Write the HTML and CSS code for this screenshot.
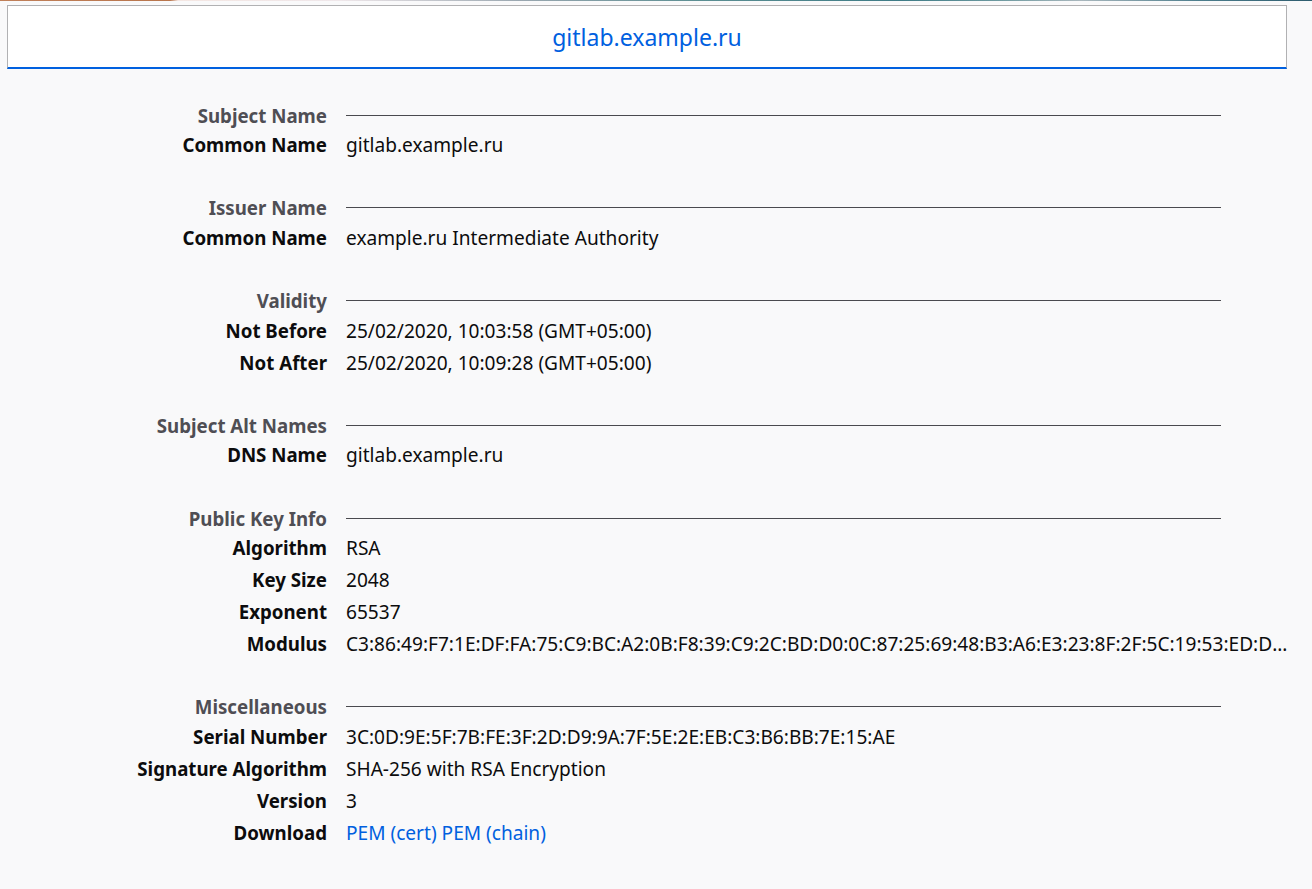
FILE: index.html
```html
<!DOCTYPE html>
<html lang="en">
<head>
<meta charset="utf-8">
<title>Certificate</title>
<link rel="stylesheet" href="styles.css">
</head>
<body>
<div class="strip"></div>
<div class="tab"><span class="tab-title">gitlab.example.ru</span></div>
<main class="cert">
  <section class="group">
    <div class="head"><span class="head-label">Subject Name</span><span class="rule"></span></div>
    <div class="row"><span class="label">Common Name</span><span class="value">gitlab.example.ru</span></div>
  </section>
  <section class="group">
    <div class="head"><span class="head-label">Issuer Name</span><span class="rule"></span></div>
    <div class="row"><span class="label">Common Name</span><span class="value">example.ru Intermediate Authority</span></div>
  </section>
  <section class="group">
    <div class="head"><span class="head-label">Validity</span><span class="rule"></span></div>
    <div class="row"><span class="label">Not Before</span><span class="value">25/02/2020, 10:03:58 (GMT+05:00)</span></div>
    <div class="row"><span class="label">Not After</span><span class="value">25/02/2020, 10:09:28 (GMT+05:00)</span></div>
  </section>
  <section class="group">
    <div class="head"><span class="head-label">Subject Alt Names</span><span class="rule"></span></div>
    <div class="row"><span class="label">DNS Name</span><span class="value">gitlab.example.ru</span></div>
  </section>
  <section class="group">
    <div class="head"><span class="head-label">Public Key Info</span><span class="rule"></span></div>
    <div class="row"><span class="label">Algorithm</span><span class="value">RSA</span></div>
    <div class="row"><span class="label">Key Size</span><span class="value">2048</span></div>
    <div class="row"><span class="label">Exponent</span><span class="value">65537</span></div>
    <div class="row"><span class="label">Modulus</span><span class="value">C3:86:49:F7:1E:DF:FA:75:C9:BC:A2:0B:F8:39:C9:2C:BD:D0:0C:87:25:69:48:B3:A6:E3:23:8F:2F:5C:19:53:ED:D4:7A:91:3E:0F:B2:64:C8:5D:11:9A:E7:40:2B:6C:D3:88:F1:05:7E:A9</span></div>
  </section>
  <section class="group">
    <div class="head"><span class="head-label">Miscellaneous</span><span class="rule"></span></div>
    <div class="row"><span class="label">Serial Number</span><span class="value">3C:0D:9E:5F:7B:FE:3F:2D:D9:9A:7F:5E:2E:EB:C3:B6:BB:7E:15:AE</span></div>
    <div class="row"><span class="label">Signature Algorithm</span><span class="value">SHA-256 with RSA Encryption</span></div>
    <div class="row"><span class="label">Version</span><span class="value">3</span></div>
    <div class="row"><span class="label">Download</span><span class="value"><a class="link" href="#">PEM (cert)</a> <a class="link" href="#">PEM (chain)</a></span></div>
  </section>
</main>
</body>
</html>
```
FILE: styles.css
```css
html, body {
  margin: 0;
  padding: 0;
}
body {
  background: #f9f9fa;
  font-family: "Noto Sans", "Open Sans", sans-serif;
  font-size: 19px;
  color: #0c0c0d;
}
.strip {
  height: 1px;
  background: linear-gradient(to right, #c0805a 0, #b8754c 170px, #f4e6e2 178px, #efe7ea 340px, #9aa7b0 520px, #5b8e92 700px, #3e7b86 900px, #6e9aa0 1000px, #a9b7bd 1080px, #4c7d8c 1200px, #2e5c6e 1312px);
}
.tab {
  margin: 4px 25px 0 7px;
  height: 61px;
  background: #fff;
  border: 1px solid #b1b1b3;
  border-bottom: 2px solid #0060df;
  display: flex;
  align-items: center;
  justify-content: center;
}
.tab-title {
  font-size: 23px;
  color: #0060df;
}
.cert {
  padding-top: 32px;
}
.group + .group {
  margin-top: 32.75px;
}
.head, .row {
  display: grid;
  grid-template-columns: 327px 1fr;
  column-gap: 19px;
}
.head {
  height: 28px;
  align-items: center;
}
.row {
  height: 32px;
  line-height: 32px;
}
.head-label {
  text-align: right;
  font-size: 18.7px;
  font-weight: 700;
  color: #4f4e54;
  white-space: nowrap;
}
.rule {
  height: 1px;
  background: #4a4a4f;
  margin-right: 91px;
}
.label {
  text-align: right;
  font-size: 18.7px;
  font-weight: 700;
  white-space: nowrap;
}
.value {
  font-size: 19.1px;
  white-space: nowrap;
  overflow: hidden;
  text-overflow: ellipsis;
  margin-right: 21px;
}
.link {
  color: #0060df;
  text-decoration: none;
}
```
